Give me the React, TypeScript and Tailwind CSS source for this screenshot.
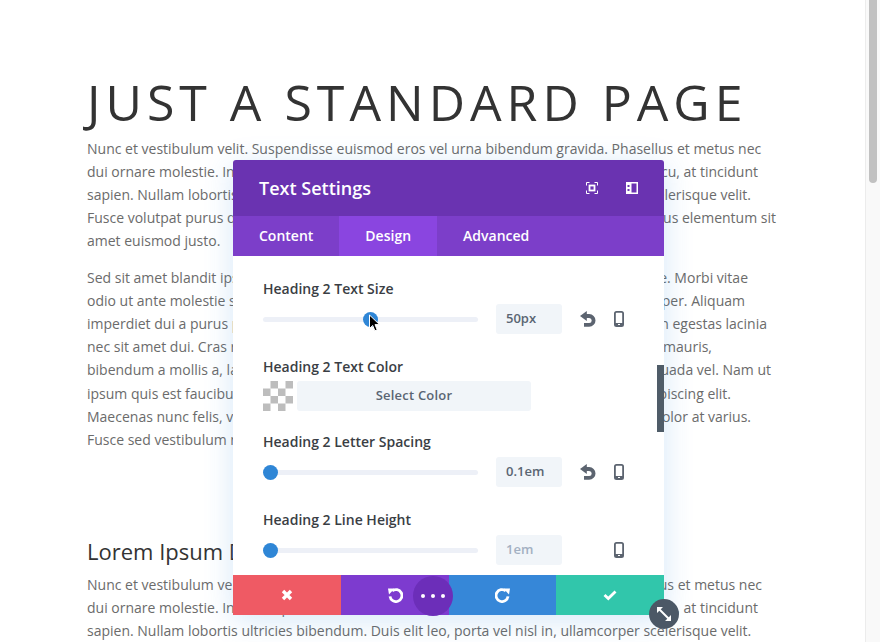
import React from "react";

type L = [string, string, string];
const P1: L[] = [
  ["Nunc et vestibulum velit. Suspendisse euismod eros vel urna bibendum gravida. Phasellus et metus nec", "", "w-[680px]"],
  ["dui ornare molestie. In consequat", "arcu, at tincidunt", "w-[671px]"],
  ["sapien. Nullam lobortis ultricies", "scelerisque velit.", "w-[664px]"],
  ["Fusce volutpat purus quis neque", "tellus elementum sit", "w-[689px]"],
  ["amet euismod justo.", "", "w-[680px]"],
];
const P2: L[] = [
  ["Sed sit amet blandit ipsum, ut", "pulvinar augue. Morbi vitae", "w-[661px]"],
  ["odio ut ante molestie sed", "ullamcorper. Aliquam", "w-[658px]"],
  ["imperdiet dui a purus pretium", "in egestas lacinia", "w-[680px]"],
  ["nec sit amet dui. Cras rhoncus", "mauris,", "w-[625px]"],
  ["bibendum a mollis a, lacinia", "malesuada vel. Nam ut", "w-[684px]"],
  ["ipsum quis est faucibus", "adipiscing elit.", "w-[644px]"],
  ["Maecenas nunc felis, vitae", "dolor at varius.", "w-[664px]"],
  ["Fusce sed vestibulum nisi", "", "w-[664px]"],
];
const P3: L[] = [
  ["Nunc et vestibulum velit. Suspendisse", "Phasellus et metus nec", "w-[675px]"],
  ["dui ornare molestie. In consequat", "arcu, at tincidunt", "w-[671px]"],
  ["sapien. Nullam lobortis ultricies bibendum. Duis elit leo, porta vel nisl in, ullamcorper scelerisque velit.", "", "w-[680px]"],
];

function Para({ lines, cls }: { lines: L[]; cls?: string }) {
  return (
    <div className={cls}>
      {lines.map((l, i) => (
        <div key={i} className={`flex justify-between whitespace-nowrap ${l[2]}`}>
          <span>{l[0]}</span>
          {l[1] && <span>{l[1]}</span>}
        </div>
      ))}
    </div>
  );
}

function ResetIcon() {
  return (
    <svg width="16" height="16" viewBox="0 0 16 16" className="shrink-0">
      <path d="M5 5h4.200a3.900 3.900 0 0 1 0 8.800H4" fill="none" stroke="#5c6470" strokeWidth="3.800" />
      <path d="M0 5 L6.800 0 V10 Z" fill="#5c6470" />
    </svg>
  );
}

function PhoneIcon() {
  return (
    <svg width="10" height="16" viewBox="0 0 10 16" className="shrink-0">
      <rect x="0.9" y="0.9" width="8.2" height="14.2" rx="1.6" fill="none" stroke="#5c6470" strokeWidth="1.8" />
      <rect x="1" y="12" width="8" height="3" fill="#5c6470" />
      <rect x="4" y="13" width="2" height="1" fill="#fff" />
    </svg>
  );
}

function SliderRow({ pos, value, muted, reset = true }: { pos: string; value: string; muted?: boolean; reset?: boolean }) {
  return (
    <div className="flex h-[30px] items-center">
      <div className="relative h-[5px] w-[215px] rounded-full bg-[#edf0f7]">
        <div className={`absolute top-[-5px] h-[15px] w-[15px] rounded-full bg-[#2f86d6] ${pos}`} />
      </div>
      <div className={`ml-[18px] flex h-[30px] w-[66px] items-center rounded-[3px] bg-[#f1f5f9] pl-[10px] text-[13px] font-semibold ${muted ? "text-[#a3b0c2]" : "text-[#5a6573]"}`}>
        {value}
      </div>
      <div className="ml-[18px] w-4 shrink-0">{reset && <ResetIcon />}</div>
      <div className="ml-[18px]"><PhoneIcon /></div>
    </div>
  );
}

function Label({ children, cls }: { children: React.ReactNode; cls: string }) {
  return <div className={`h-5 text-[14px] font-semibold leading-5 text-[#3a3e44] ${cls}`}>{children}</div>;
}

function Checker() {
  const cells: [number, number][] = [[1, 0], [3, 0], [0, 1], [2, 1], [1, 2], [3, 2], [0, 3], [2, 3]];
  return (
    <svg width="30" height="30" viewBox="0 0 30 30" className="shrink-0">
      {cells.map(([x, y]) => (
        <rect key={`${x}${y}`} x={x * 7.5} y={y * 7.5} width="7.5" height="7.5" fill="#bdbdbd" />
      ))}
    </svg>
  );
}

function Undo({ flip }: { flip?: boolean }) {
  return (
    <svg width="16" height="16" viewBox="0 0 16 16" className={flip ? "-scale-x-100" : ""}>
      <path d="M4.600 3.900 A6 6 0 1 1 2.400 9.400" transform="translate(0.6 0)" fill="none" stroke="#fff" strokeWidth="2.800" />
      <path d="M1 1.400 L7.600 1.600 L2 7.400 Z" fill="#fff" />
    </svg>
  );
}

export default function App() {
  return (
    <div className="relative flex h-[642px] w-[880px] overflow-hidden bg-white font-['Open_Sans',sans-serif] text-[14px] leading-[23.15px] text-[#6b6b6b]">
      <main className="flex-1 pl-[87px] pt-[77px]">
        <h1 className="whitespace-nowrap text-[50px] font-normal uppercase leading-[50px] tracking-[5px] text-[#333]">Just a standard page</h1>
        <Para lines={P1} cls="mt-[9.5px]" />
        <Para lines={P2} cls="mt-[13.500px]" />
        <h2 className="mt-[87px] whitespace-nowrap text-[22px] leading-[26px] text-[#333]">Lorem Ipsum Dolor</h2>
        <Para lines={P3} cls="mt-[9px]" />
      </main>
      <aside className="w-[15px] shrink-0 border-l border-[#ececec] bg-[#f9f9f9] pl-[3px]">
        <div className="h-[183px] w-2 rounded-b-full bg-[#c1c1c1]" />
      </aside>

      <section className="absolute left-[233px] top-[160px] w-[431px] rounded-t-[3px] bg-white shadow-[0_5px_30px_rgba(43,135,218,0.2)]">
        <header className="flex h-14 items-center rounded-t-[3px] bg-[#6a33b1] pl-[26px] text-[18px] font-semibold text-white">
          <span className="flex-1 pt-[2px]">Text Settings</span>
          <svg width="12" height="12" viewBox="0 0 12 12" className="mr-[28px]">
            <path d="M.5 3.5V.5h3M8.500 .5h3v3M11.500 8.500v3h-3M3.500 11.500h-3v-3" fill="none" stroke="#fff" />
            <rect x="3.500" y="3.500" width="5" height="5" fill="none" stroke="#fff" strokeWidth="1.800" />
          </svg>
          <svg width="12" height="12" viewBox="0 0 12 12" className="mr-[26px]">
            <path fillRule="evenodd" d="M0 0h12v12H0z M1.500 3v2h2V3z M1.500 7v2h2V7z M5.500 1.500v9h5v-9z" fill="#fff" />
          </svg>
        </header>
        <nav className="flex h-10 items-center bg-[#7c3ec9] text-[14px] font-semibold text-white">
          <div className="px-[26px] leading-10">Content</div>
          <div className="bg-[#8a45e0] px-[26px] leading-10">Design</div>
          <div className="px-[26px] leading-10">Advanced</div>
        </nav>
        <div className="relative h-[319px] overflow-hidden pl-[30px]">
          <Label cls="mt-[23px] mb-[5px]">Heading 2 Text Size</Label>
          <SliderRow pos="left-[100px]" value="50px" />
          <Label cls="mt-[23px] mb-[4px]">Heading 2 Text Color</Label>
          <div className="flex h-[30px] gap-1">
            <Checker />
            <div className="flex w-[234px] items-center justify-center rounded-[3px] bg-[#f1f5f9] text-[13px] font-semibold tracking-[0.2px] text-[#5a6573]">Select Color</div>
          </div>
          <Label cls="mt-[21px] mb-[5px]">Heading 2 Letter Spacing</Label>
          <SliderRow pos="left-0" value="0.1em" />
          <Label cls="mt-[23px] mb-[5px]">Heading 2 Line Height</Label>
          <SliderRow pos="left-0" value="1em" muted reset={false} />
          <div className="absolute right-0 top-[109px] h-[67px] w-[7px] bg-[#4f5c68]" />
        </div>
        <footer className="relative grid h-10 grid-cols-4 shadow-[inset_0_1px_0_rgba(0,0,0,0.25)]">
          <div className="flex items-center justify-center bg-[#ef5a64]">
            <svg width="12" height="12" viewBox="0 0 12 12"><path d="M2 2l8 8M10 2l-8 8" stroke="#fff" strokeWidth="3.400" /></svg>
          </div>
          <div className="flex items-center justify-center bg-[#7d3bcf]"><span className="ml-[1px] flex"><Undo /></span></div>
          <div className="flex items-center justify-center bg-[#3687d8]"><span className="ml-[1px] flex"><Undo flip /></span></div>
          <div className="flex items-center justify-center bg-[#31c6ab]">
            <svg width="14" height="12" viewBox="0 0 14 12"><path d="M1.500 6l3.800 3.600L12.500 2.500" fill="none" stroke="#fff" strokeWidth="2.800" /></svg>
          </div>
          <div className="absolute left-[180px] top-[1px] flex h-10 w-10 items-center justify-center gap-[6px] rounded-full bg-[#6c2eb9]">
            <i className="h-1 w-1 rounded-full bg-white" />
            <i className="h-1 w-1 rounded-full bg-white" />
            <i className="h-1 w-1 rounded-full bg-white" />
          </div>
          <div className="absolute right-[-15px] top-6 flex h-[30px] w-[30px] items-center justify-center rounded-full bg-[#4c5866]">
            <svg width="18" height="18" viewBox="0 0 18 18">
              <path d="M4.500 4.500l9 9" stroke="#fff" strokeWidth="2" />
              <path d="M2 2h6L2 8zM16 16h-6l6-6z" fill="#fff" />
            </svg>
          </div>
        </footer>
      </section>

      <svg width="14" height="20" viewBox="0 0 14 20" className="absolute left-[368px] top-[314px]">
        <path d="M1.500 1v13.500l3.200-3 2.200 5.300 2.300-1-2.200-5.200h4.500z" fill="#000" stroke="#fff" strokeWidth="1" />
      </svg>
    </div>
  );
}
